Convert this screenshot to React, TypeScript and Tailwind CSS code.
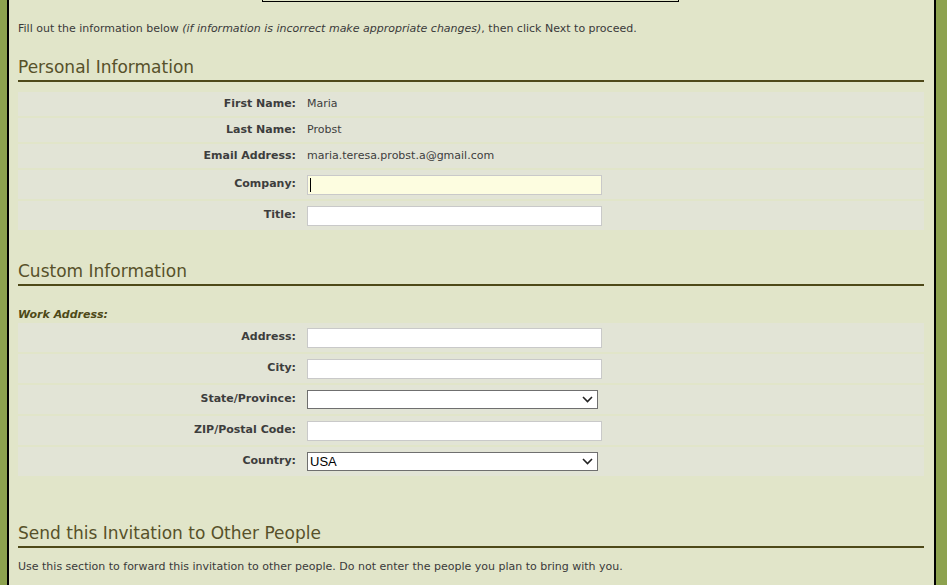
import React from "react";

const font = { fontFamily: '"DejaVu Sans", Verdana, sans-serif' };

function SectionHeading({ title, className = "" }: { title: string; className?: string }) {
	return (
		<div className={`border-b-2 border-[#4e4918] pb-[2px] ${className}`}>
			<h2 className="text-[17px] leading-[22px] text-[#57512a]">{title}</h2>
		</div>
	);
}

function Row({ label, tall = false, children }: { label: string; tall?: boolean; children: React.ReactNode }) {
	return (
		<div className={`flex items-center bg-[#e2e4d6] ${tall ? "h-[29px]" : "h-[24px]"}`}>
			<div className="w-[278px] shrink-0 text-right text-[11px] font-bold text-[#3d3d3d]">{label}</div>
			<div className="ml-[11px] text-[11px] text-[#3d3d3d]">{children}</div>
		</div>
	);
}

function TextBox({ focused = false }: { focused?: boolean }) {
	return (
		<div
			className={`h-[20px] w-[295px] border border-[#c9c9c9] flex items-center pl-[2px] ${
				focused ? "bg-[#fdfde0]" : "bg-white"
			}`}
		>
			{focused && <span className="block h-[14px] w-[1px] bg-black" />}
		</div>
	);
}

function SelectBox({ value = "" }: { value?: string }) {
	return (
		<div className="h-[19px] w-[291px] border border-[#6f6f6f] bg-white flex items-center justify-between pl-[2px] pr-[4px]">
			<span className="text-[13px] leading-none text-black" style={{ fontFamily: '"Liberation Sans", Arial, sans-serif' }}>
				{value}
			</span>
			<svg width="11" height="7" viewBox="0 0 11 7" fill="none">
				<path d="M1 1l4.5 4.5L10 1" stroke="#222" strokeWidth="1.6" />
			</svg>
		</div>
	);
}

export default function App() {
	return (
		<div className="flex h-[585px] w-full overflow-hidden bg-[#8da24f]" style={font}>
			<div className="w-[7px] shrink-0" />
			<div className="flex-1 border-x-2 border-black bg-[#e1e5c9] pl-[9px] pr-[10px]">
				{/* cut-off box at top */}
				<div className="ml-[244px] h-[2px] w-[417px] border-x border-b-[1.5px] border-black" />

				<p className="mt-[20px] text-[11px] leading-[14px] text-[#3a3a3a]">
					Fill out the information below <i>(if information is incorrect make appropriate changes)</i>, then click Next to proceed.
				</p>

				<SectionHeading title="Personal Information" className="mt-[20px]" />
				<div className="mt-[10px] flex flex-col gap-[2px]">
					<Row label="First Name:">Maria</Row>
					<Row label="Last Name:">Probst</Row>
					<Row label="Email Address:">maria.teresa.probst.a@gmail.com</Row>
					<Row label="Company:" tall>
						<TextBox focused />
					</Row>
					<Row label="Title:" tall>
						<TextBox />
					</Row>
				</div>

				<SectionHeading title="Custom Information" className="mt-[30px]" />
				<div className="mt-[22px] text-[11px] font-bold italic leading-[14px] text-[#4e4918]">Work Address:</div>
				<div className="mt-[1px] flex flex-col gap-[2px]">
					<Row label="Address:" tall>
						<TextBox />
					</Row>
					<Row label="City:" tall>
						<TextBox />
					</Row>
					<Row label="State/Province:" tall>
						<SelectBox />
					</Row>
					<Row label="ZIP/Postal Code:" tall>
						<TextBox />
					</Row>
					<Row label="Country:" tall>
						<SelectBox value="USA" />
					</Row>
				</div>

				<SectionHeading title="Send this Invitation to Other People" className="mt-[46px]" />
				<p className="mt-[12px] text-[11px] leading-[14px] text-[#3a3a3a]">
					Use this section to forward this invitation to other people. Do not enter the people you plan to bring with you.
				</p>
			</div>
			<div className="w-[11px] shrink-0" />
		</div>
	);
}
